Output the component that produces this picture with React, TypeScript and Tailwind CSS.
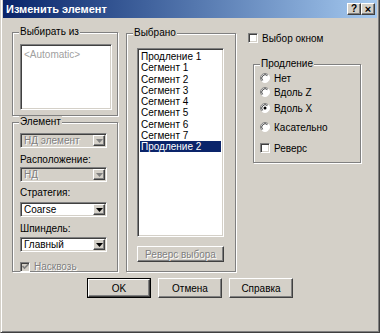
import { ReactNode } from 'react'

const sunken =
  'border border-t-[#808080] border-l-[#808080] border-b-white border-r-white shadow-[inset_1px_1px_0_#404040,inset_-1px_-1px_0_#d4d0c8]'
const raised =
  'border border-t-white border-l-white border-b-[#404040] border-r-[#404040] shadow-[inset_-1px_-1px_0_#808080,inset_1px_1px_0_#d4d0c8]'

const Group = ({ label, className, children }: { label: string; className: string; children?: ReactNode }) => (
  <div
    className={`relative border border-[#808080] shadow-[1px_1px_0_white,inset_1px_1px_0_white] ${className}`}
  >
    <span className="absolute -top-[7px] left-[6px] bg-[#d4d0c8] px-[1px] leading-[12px]">{label}</span>
    {children}
  </div>
)

const Combo = ({ value, disabled }: { value: string; disabled?: boolean }) => (
  <div
    className={`${sunken} flex h-[15px] w-[87px] items-stretch p-[1px] ${disabled ? 'bg-[#d4d0c8]' : 'bg-white'}`}
  >
    <span
      className={`flex-1 truncate pl-[2px] leading-[11px] ${disabled ? 'text-[#808080] [text-shadow:1px_1px_0_white]' : 'text-black'}`}
    >
      {value}
    </span>
    <span className={`${raised} flex w-[12px] items-center justify-center bg-[#d4d0c8]`}>
      <svg width="7" height="4" viewBox="0 0 7 4">
        <path d="M0 0h7L3.5 4z" fill={disabled ? '#808080' : '#000'} />
      </svg>
    </span>
  </div>
)

const CheckBox = ({ checked, disabled }: { checked?: boolean; disabled?: boolean }) => (
  <span className={`${sunken} flex h-[10px] w-[10px] items-center justify-center ${disabled ? 'bg-[#d4d0c8]' : 'bg-white'}`}>
    {checked && (
      <svg width="7" height="7" viewBox="0 0 7 7">
        <path d="M0.5 3l2 2 4-4" stroke={disabled ? '#808080' : '#000'} strokeWidth="1.6" fill="none" />
      </svg>
    )}
  </span>
)

const Radio = ({ checked }: { checked?: boolean }) => (
  <svg width="10" height="10" viewBox="0 0 10 10" className="shrink-0">
    <circle cx="5" cy="5" r="4.5" fill="white" />
    <path d="M8.2 1.8A4.5 4.5 0 0 0 1.8 8.2" stroke="#808080" fill="none" />
    <path d="M1.8 8.2A4.5 4.5 0 0 0 8.2 1.8" stroke="#ffffff" fill="none" />
    <path d="M7.4 2.6A3.4 3.4 0 0 0 2.6 7.4" stroke="#404040" fill="none" />
    {checked && <circle cx="5" cy="5" r="1.5" fill="#000" />}
  </svg>
)

const selected = ['Продление 1', 'Сегмент 1', 'Сегмент 2', 'Сегмент 3', 'Сегмент 4', 'Сегмент 5', 'Сегмент 6', 'Сегмент 7', 'Продление 2']

const Button = ({ children, isDefault }: { children: ReactNode; isDefault?: boolean }) => (
  <div className={isDefault ? 'border border-black' : ''}>
    <div
      className={`${raised} flex ${isDefault ? 'h-[18px] w-[62px]' : 'h-[20px] w-[64px]'} items-center justify-center bg-[#d4d0c8]`}
    >
      {children}
    </div>
  </div>
)

export default function App() {
  return (
    <div className="h-[336px] w-[381px] bg-white font-['Liberation_Sans',Arial,sans-serif] text-[10px] text-black">
      <div className="flex h-[333px] w-[380px] flex-col border-b border-l border-r border-b-[#404040] border-l-[#d4d0c8] border-r-[#404040] bg-[#d4d0c8] px-[2px] pb-[2px] shadow-[inset_1px_0_0_white,inset_-1px_-1px_0_#808080]">
        {/* title */}
        <div className="flex h-[18px] shrink-0 items-center bg-gradient-to-r from-[#0a246a] to-[#a6caf0] pl-[3px] pr-[2px]">
          <span className="flex-1 text-[11px] font-bold text-white">Изменить элемент</span>
          <div className={`${raised} flex h-[12px] w-[14px] items-center justify-center bg-[#d4d0c8] text-[10px] font-bold leading-none`}>?</div>
          <div className={`${raised} flex h-[12px] w-[14px] items-center justify-center bg-[#d4d0c8] text-[11px] font-bold leading-none`}>×</div>
        </div>

        {/* body */}
        <div className="flex items-start pl-[9px] pt-[14px]">
          {/* left column */}
          <div className="flex w-[106px] flex-col">
            <Group label="Выбирать из" className="h-[84px] pl-[7px] pt-[11px]">
              <div className={`${sunken} h-[66px] w-[92px] bg-white px-[3px] py-[2px] text-[#a0a0a0]`}>&lt;Automatic&gt;</div>
            </Group>
            <Group label="Элемент" className="mt-[6px] h-[150px] pl-[7px] pt-[10px]">
              <div className="flex flex-col">
                <Combo value="НД элемент" disabled />
                <span className="mt-[5px] h-[13px] leading-[13px]">Расположение:</span>
                <div className="mt-[1px]"><Combo value="НД" disabled /></div>
                <span className="mt-[4px] h-[13px] leading-[13px]">Стратегия:</span>
                <div className="mt-[3px]"><Combo value="Coarse" /></div>
                <span className="mt-[5px] h-[13px] leading-[13px]">Шпиндель:</span>
                <div className="mt-[2px]"><Combo value="Главный" /></div>
                <div className="mt-[7px] flex items-center gap-[4px]">
                  <CheckBox checked disabled />
                  <span className="text-[#808080] [text-shadow:1px_1px_0_white]">Насквозь</span>
                </div>
              </div>
            </Group>
          </div>

          {/* middle column */}
          <Group label="Выбрано" className="ml-[8px] mt-[1px] h-[239px] w-[110px] pl-[10px] pt-[14px]">
            <div className={`${sunken} h-[189px] w-[87px] bg-white p-[2px]`}>
              {selected.map((item, i) => (
                <div
                  key={item}
                  className={`h-[11.25px] pl-[1px] leading-[11.25px] ${i === selected.length - 1 ? 'bg-[#0a246a] text-white' : ''}`}
                >
                  {item}
                </div>
              ))}
            </div>
            <div className={`${raised} mt-[9px] flex h-[16px] w-[87px] items-center justify-center text-[#808080] [text-shadow:1px_1px_0_white]`}>
              Реверс выбора
            </div>
          </Group>

          {/* right column */}
          <div className="ml-[12px] mt-[1px] flex w-[113px] flex-col">
            <div className="flex h-[10px] items-center gap-[4px]">
              <CheckBox />
              <span>Выбор окном</span>
            </div>
            <Group label="Продление" className="ml-[5px] mt-[21px] h-[99px] w-[108px] pl-[6px] pt-[8px]">
              <div className="flex flex-col">
                <div className="flex h-[10px] items-center gap-[4px]"><Radio /><span>Нет</span></div>
                <div className="mt-[4px] flex h-[10px] items-center gap-[4px]"><Radio /><span>Вдоль Z</span></div>
                <div className="mt-[6px] flex h-[10px] items-center gap-[4px]"><Radio checked /><span>Вдоль X</span></div>
                <div className="mt-[9px] flex h-[10px] items-center gap-[4px]"><Radio /><span>Касательно</span></div>
                <div className="mt-[11px] flex h-[10px] items-center gap-[4px]"><CheckBox /><span>Реверс</span></div>
              </div>
            </Group>
          </div>
        </div>

        {/* buttons */}
        <div className="mt-[6px] flex justify-center gap-[7px]">
          <Button isDefault>OK</Button>
          <Button>Отмена</Button>
          <Button>Справка</Button>
        </div>
      </div>
    </div>
  )
}
